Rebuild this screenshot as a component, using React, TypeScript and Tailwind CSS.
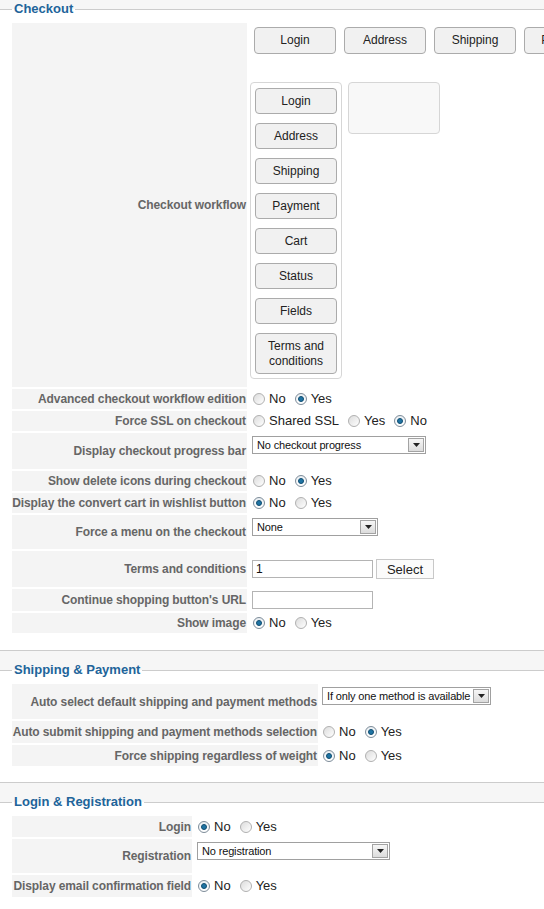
import React from "react";

const steps = ["Login", "Address", "Shipping", "Payment", "Cart", "Status", "Fields"];

function Radio({ on }: { on?: boolean }) {
  return on ? (
    <span className="grid h-[12px] w-[12px] shrink-0 place-items-center rounded-full border border-[#7d8c99] bg-gradient-to-b from-[#e9eef2] to-white">
      <span className="h-[6px] w-[6px] rounded-full border border-[#0f4c70] bg-[#1f74a4]" />
    </span>
  ) : (
    <span className="h-[12px] w-[12px] shrink-0 rounded-full border border-[#b0b0b0] bg-gradient-to-br from-[#dcdcdc] to-white" />
  );
}

function Radios({ opts, sel }: { opts: string[]; sel: number }) {
  return (
    <div className="flex items-center gap-[9px] pl-[1px] text-[13px] text-[#222]">
      {opts.map((o, i) => (
        <span key={o} className="flex items-center gap-[4px]">
          <Radio on={i === sel} />
          {o}
        </span>
      ))}
    </div>
  );
}

function Select({ text, w }: { text: string; w: string }) {
  return (
    <div className={`flex h-[18px] items-center justify-between border border-[#a0a0a0] bg-white pl-[4px] pr-[1px] text-[11px] text-[#111] ${w}`}>
      <span className="whitespace-nowrap tracking-[-0.15px]">{text}</span>
      <span className="grid h-[14px] w-[16px] shrink-0 place-items-center border border-[#a3a3a3] bg-gradient-to-b from-[#f6f6f6] to-[#dcdcdc]">
        <svg width="7" height="4" viewBox="0 0 7 4">
          <path d="M0 0h7L3.5 4z" fill="#222" />
        </svg>
      </span>
    </div>
  );
}

function Input({ value }: { value?: string }) {
  return (
    <div className="flex h-[18px] w-[121px] items-center border border-[#b4b4b4] bg-white pl-[3px] text-[12px] text-[#111]">
      {value}
    </div>
  );
}

function Row({
  label,
  h,
  lw,
  pl,
  top,
  children,
}: {
  label: string;
  h: string;
  lw: string;
  pl: string;
  top?: boolean;
  children: React.ReactNode;
}) {
  return (
    <div className={`flex gap-[2px] ${h}`}>
      <div className={`flex shrink-0 items-center justify-end whitespace-nowrap bg-[#f4f4f4] pr-[1px] text-[12px] font-bold tracking-[-0.1px] text-[#666] ${lw}`}>
        {label}
      </div>
      <div className={`flex min-w-0 flex-1 ${top ? "items-start pt-[3px]" : "items-center"} ${pl}`}>{children}</div>
    </div>
  );
}

function Legend({ children }: { children: React.ReactNode }) {
  return (
    <legend className="px-[2px] text-[13px] font-bold leading-[16px] text-[#21649a]">{children}</legend>
  );
}

function Btn({ children, h = "h-[26px]" }: { children: React.ReactNode; h?: string }) {
  return (
    <div className={`grid w-[82px] shrink-0 place-items-center rounded-[4px] border border-[#ababab] bg-[#f1f1f1] text-center text-[12px] leading-[15px] text-[#222] ${h}`}>
      {children}
    </div>
  );
}

export default function App() {
  const cw = "w-[235px]";
  return (
    <div className="h-[909px] w-[544px] overflow-hidden bg-[#f6f6f6] pt-[1px] font-['Liberation_Sans',Arial,sans-serif]">
      <fieldset className="min-w-0 border-y border-[#cccccc] bg-white px-[12px] pb-[17px] pt-[6px]">
        <Legend>Checkout</Legend>
        <div className="flex flex-col gap-[2px]">
          <Row label="Checkout workflow" h="h-[364px]" lw={cw} pl="pl-0" top>
            <div className="flex flex-col pt-[1px]">
              <div className="flex gap-[8px] pl-[5px]">
                {[...steps, "Terms and conditions"].map((s) => (
                  <Btn key={s} h="h-[27px]">
                    <span className="whitespace-nowrap">{s}</span>
                  </Btn>
                ))}
              </div>
              <div className="mt-[28px] flex items-start gap-[6px] pl-[1px]">
                <div className="flex flex-col gap-[9px] rounded-[4px] border border-[#d6d6d6] px-[4px] pb-[4px] pt-[5px]">
                  {steps.map((s) => (
                    <Btn key={s}>{s}</Btn>
                  ))}
                  <Btn h="h-[41px]">
                    Terms and
                    <br />
                    conditions
                  </Btn>
                </div>
                <div className="h-[52px] w-[92px] rounded-[4px] border border-[#d6d6d6] bg-[#f8f8f8]" />
              </div>
            </div>
          </Row>
          <Row label="Advanced checkout workflow edition" h="h-[20px]" lw={cw} pl="pl-[3px]">
            <Radios opts={["No", "Yes"]} sel={1} />
          </Row>
          <Row label="Force SSL on checkout" h="h-[20px]" lw={cw} pl="pl-[3px]">
            <Radios opts={["Shared SSL", "Yes", "No"]} sel={2} />
          </Row>
          <Row label="Display checkout progress bar" h="h-[36px]" lw={cw} pl="pl-[3px]" top>
            <Select text="No checkout progress" w="w-[174px]" />
          </Row>
          <Row label="Show delete icons during checkout" h="h-[20px]" lw={cw} pl="pl-[3px]">
            <Radios opts={["No", "Yes"]} sel={1} />
          </Row>
          <Row label="Display the convert cart in wishlist button" h="h-[20px]" lw={cw} pl="pl-[3px]">
            <Radios opts={["No", "Yes"]} sel={0} />
          </Row>
          <Row label="Force a menu on the checkout" h="h-[34px]" lw={cw} pl="pl-[3px]" top>
            <Select text="None" w="w-[126px]" />
          </Row>
          <Row label="Terms and conditions" h="h-[36px]" lw={cw} pl="pl-[3px]">
            <div className="flex items-center gap-[3px]">
              <Input value="1" />
              <div className="grid h-[20px] w-[58px] place-items-center border border-[#c8c8c8] bg-[#fbfbfb] text-[13px] text-[#222]">
                Select
              </div>
            </div>
          </Row>
          <Row label="Continue shopping button's URL" h="h-[22px]" lw={cw} pl="pl-[3px]">
            <Input />
          </Row>
          <Row label="Show image" h="h-[20px]" lw={cw} pl="pl-[3px]">
            <Radios opts={["No", "Yes"]} sel={0} />
          </Row>
        </div>
      </fieldset>

      <fieldset className="mt-[11px] min-w-0 border-y border-[#cccccc] bg-white px-[12px] pb-[16px] pt-[6px]">
        <Legend>Shipping &amp; Payment</Legend>
        <div className="flex flex-col gap-[2px]">
          <Row label="Auto select default shipping and payment methods" h="h-[35px]" lw="w-[306px]" pl="pl-[2px]" top>
            <Select text="If only one method is available" w="w-[169px]" />
          </Row>
          <Row label="Auto submit shipping and payment methods selection" h="h-[22px]" lw="w-[306px]" pl="pl-[2px]">
            <Radios opts={["No", "Yes"]} sel={1} />
          </Row>
          <Row label="Force shipping regardless of weight" h="h-[21px]" lw="w-[306px]" pl="pl-[2px]">
            <Radios opts={["No", "Yes"]} sel={0} />
          </Row>
        </div>
      </fieldset>

      <fieldset className="mt-[11px] min-w-0 border-y border-[#cccccc] bg-white px-[12px] pb-[16px] pt-[6px]">
        <Legend>Login &amp; Registration</Legend>
        <div className="flex flex-col gap-[2px]">
          <Row label="Login" h="h-[21px]" lw="w-[180px]" pl="pl-[3px]">
            <Radios opts={["No", "Yes"]} sel={0} />
          </Row>
          <Row label="Registration" h="h-[34px]" lw="w-[180px]" pl="pl-[3px]" top>
            <Select text="No registration" w="w-[193px]" />
          </Row>
          <Row label="Display email confirmation field" h="h-[22px]" lw="w-[180px]" pl="pl-[3px]">
            <Radios opts={["No", "Yes"]} sel={0} />
          </Row>
        </div>
      </fieldset>
    </div>
  );
}
